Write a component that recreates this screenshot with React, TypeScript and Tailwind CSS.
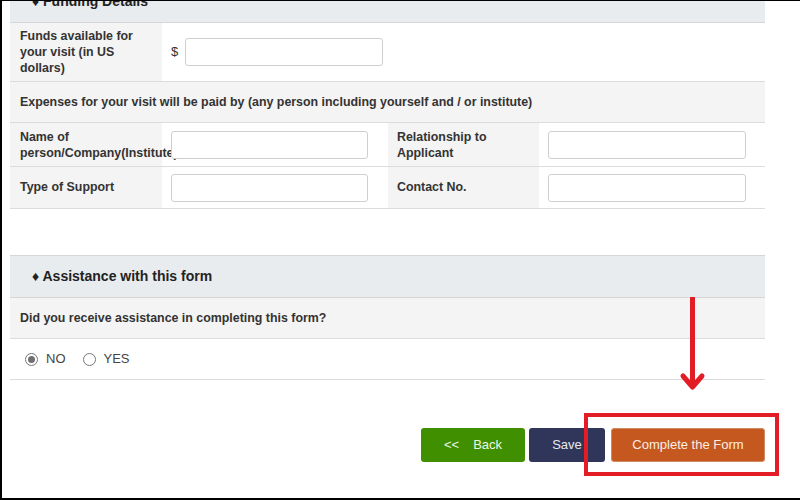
import React from "react";

const font = { fontFamily: '"Liberation Sans", Arial, sans-serif' };

function Input({ w }: { w: string }) {
  return <div className={`${w} h-[28px] bg-white border border-[#cfcfcf] rounded-[3px]`} />;
}

function Radio({ checked }: { checked?: boolean }) {
  return (
    <span className="w-[13px] h-[13px] rounded-full border border-[#767676] bg-white flex items-center justify-center">
      {checked && <span className="w-[7px] h-[7px] rounded-full bg-[#6f6f6f]" />}
    </span>
  );
}

export default function App() {
  return (
    <div
      className="relative w-[800px] h-[500px] overflow-hidden bg-white border-l-2 border-t border-b-2 border-black text-[#333]"
      style={font}
    >
      <div className="ml-[8px] w-[755px] flex flex-col">
        {/* Funding Details header */}
        <div className="mt-[-20px] h-[42px] bg-[#e9ecef] border-b border-[#d6d6d6] flex items-center pl-[22px] text-[14px] font-bold text-[#222]">
          ♦ Funding Details
        </div>
        {/* Row 1 */}
        <div className="flex border-b border-[#dcdcdc] h-[59px]">
          <div className="w-[152px] bg-[#f4f4f4] px-[10px] flex items-center text-[12.4px] font-bold leading-[16px]">
            Funds available for your visit (in US dollars)
          </div>
          <div className="flex-1 flex items-center pl-[9px] gap-[7px] text-[13px] text-[#333]">
            <span className="text-[#333]">$</span>
            <Input w="w-[198px]" />
          </div>
        </div>
        {/* Row 2 */}
        <div className="h-[41px] bg-[#f4f4f4] border-b border-[#dcdcdc] flex items-center px-[10px] text-[12.4px] font-bold">
          Expenses for your visit will be paid by (any person including yourself and / or institute)
        </div>
        {/* Row 3 */}
        <div className="flex border-b border-[#dcdcdc] h-[44px]">
          <div className="w-[152px] bg-[#f4f4f4] pl-[10px] flex items-center text-[12.4px] font-bold leading-[16px] whitespace-nowrap overflow-visible relative z-0">
            <span>Name of<br />person/Company(Institute)</span>
          </div>
          <div className="w-[226px] flex items-center pl-[9px] relative z-10">
            <Input w="w-[197px]" />
          </div>
          <div className="w-[151px] bg-[#f4f4f4] pl-[9px] flex items-center text-[12.4px] font-bold leading-[16px]">
            <span>Relationship to<br />Applicant</span>
          </div>
          <div className="flex-1 flex items-center pl-[9px]">
            <Input w="w-[198px]" />
          </div>
        </div>
        {/* Row 4 */}
        <div className="flex border-b border-[#dcdcdc] h-[42px]">
          <div className="w-[152px] bg-[#f4f4f4] pl-[10px] flex items-center text-[12.4px] font-bold">
            Type of Support
          </div>
          <div className="w-[226px] flex items-center pl-[9px]">
            <Input w="w-[197px]" />
          </div>
          <div className="w-[151px] bg-[#f4f4f4] pl-[9px] flex items-center text-[12.4px] font-bold">
            Contact No.
          </div>
          <div className="flex-1 flex items-center pl-[9px]">
            <Input w="w-[198px]" />
          </div>
        </div>

        {/* Assistance header */}
        <div className="mt-[46px] h-[43px] bg-[#e9ecef] border-t border-b border-[#d6d6d6] flex items-center pl-[22px] text-[14px] font-bold text-[#222]">
          ♦ Assistance with this form
        </div>
        <div className="h-[41px] bg-[#f4f4f4] border-b border-[#dcdcdc] flex items-center px-[10px] text-[12.4px] font-bold">
          Did you receive assistance in completing this form?
        </div>
        <div className="h-[41px] border-b border-[#dcdcdc] flex items-center pl-[15px] text-[13px] text-[#444]">
          <label className="flex items-center gap-[8px]">
            <Radio checked />
            <span>NO</span>
          </label>
          <label className="flex items-center gap-[8px] ml-[17px]">
            <Radio />
            <span>YES</span>
          </label>
        </div>

        {/* Buttons */}
        <div className="mt-[48px] flex justify-end">
          <button className="h-[34px] w-[104px] rounded-[3px] bg-[#3f8f00] text-[#eef7e6] text-[13px] flex items-center justify-center gap-[14px]">
            <span>&lt;&lt;</span>
            <span>Back</span>
          </button>
          <button className="ml-[4px] h-[34px] w-[76px] rounded-[3px] bg-[#2f3659] text-[#e8e9f0] text-[13px]">
            Save
          </button>
          <button className="ml-[6px] h-[34px] w-[154px] rounded-[3px] bg-[#c4581f] border border-[#d08a64] text-[#fbeee6] text-[13px]">
            Complete the Form
          </button>
        </div>
      </div>

      {/* Annotation: red arrow */}
      <svg className="absolute left-[676px] top-[296px]" width="30" height="96" viewBox="0 0 30 96">
        <line x1="14.5" y1="0" x2="14.5" y2="90" stroke="#e31d25" strokeWidth="5" />
        <polyline points="5,79 14.5,90 24,79" fill="none" stroke="#e31d25" strokeWidth="5" strokeLinecap="round" strokeLinejoin="round" />
      </svg>
      {/* Annotation: red box */}
      <div className="absolute left-[582px] top-[412px] w-[195px] h-[63px] border-4 border-[#e31d25]" />
    </div>
  );
}
